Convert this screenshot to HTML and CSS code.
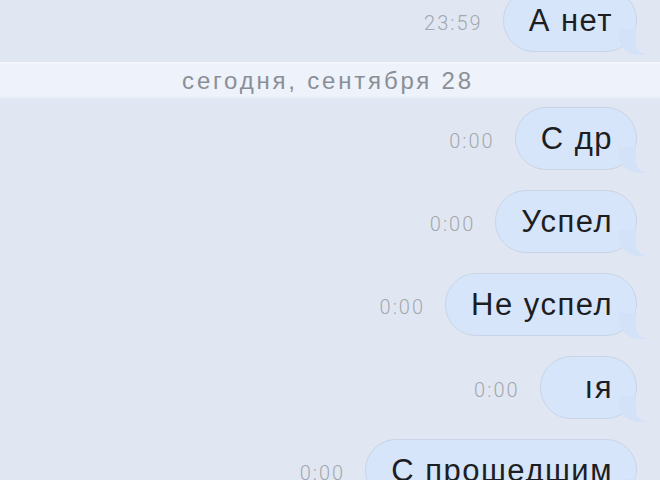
FILE: index.html
```html
<!DOCTYPE html>
<html lang="ru">
<head>
  <meta charset="UTF-8">
  <title>Сообщения</title>
  <link rel="stylesheet" href="styles.css">
</head>
<body>

  <main class="chat">
    <div class="msg">
      <span class="time">23:59</span>
      <div class="bubble">А нет</div>
    </div>

    <div class="day">сегодня, сентября 28</div>

    <div class="msg">
      <span class="time">0:00</span>
      <div class="bubble">С др</div>
    </div>
    <div class="msg">
      <span class="time">0:00</span>
      <div class="bubble">Успел</div>
    </div>
    <div class="msg">
      <span class="time">0:00</span>
      <div class="bubble">Не успел</div>
    </div>
    <div class="msg">
      <span class="time">0:00</span>
      <div class="bubble wide-left">ıя</div>
    </div>
    <div class="msg">
      <span class="time">0:00</span>
      <div class="bubble">С прошедшим</div>
    </div>
  </main>

</body>
</html>
```
FILE: styles.css
```css
* { box-sizing: border-box; margin: 0; padding: 0; }

body {
  background: #e1e7f2;
  font-family: 'Liberation Sans', Arial, sans-serif;
  width: 660px;
  height: 480px;
  overflow: hidden;
}

.chat {
  display: flex;
  flex-direction: column;
  gap: 20px;
  margin-top: -11px;
}

.msg {
  display: flex;
  justify-content: flex-end;
  align-items: center;
  gap: 20px;
  padding-right: 23px;
}

.time {
  font-family: Roboto, 'Liberation Sans', sans-serif;
  font-weight: 300;
  font-size: 20px;
  letter-spacing: 2px;
  color: #a3a7ae;
  padding-top: 5px;
}

.bubble {
  position: relative;
  height: 63px;
  line-height: 61px;
  padding: 0 23px 0 25px;
  font-size: 31px;
  letter-spacing: 1.5px;
  white-space: nowrap;
  color: #1d1e22;
  background: #d6e5fa;
  border: 1px solid #c9d5e6;
  border-radius: 31px;
}

.bubble.wide-left {
  padding-left: 44px;
}

/* tail in the bottom right corner */
.bubble::before {
  content: "";
  position: absolute;
  right: -13px;
  bottom: -4px;
  width: 30px;
  height: 26px;
  background: #d3e2f7;
  border-bottom-left-radius: 20px 18px;
}

.bubble::after {
  content: "";
  position: absolute;
  right: -26px;
  bottom: -4px;
  width: 26px;
  height: 30px;
  background: #e1e7f2;
  border-bottom-left-radius: 13px 12px;
}

.day {
  margin: -10px 0 -12px;
  height: 37px;
  line-height: 34px;
  text-align: center;
  padding-right: 4px;
  font-size: 24px;
  letter-spacing: 2.8px;
  color: #8b8f95;
  background: #edf2fb;
  border-top: 2px solid #f3f6fc;
  border-bottom: 2px solid #e6ecf6;
}
```
